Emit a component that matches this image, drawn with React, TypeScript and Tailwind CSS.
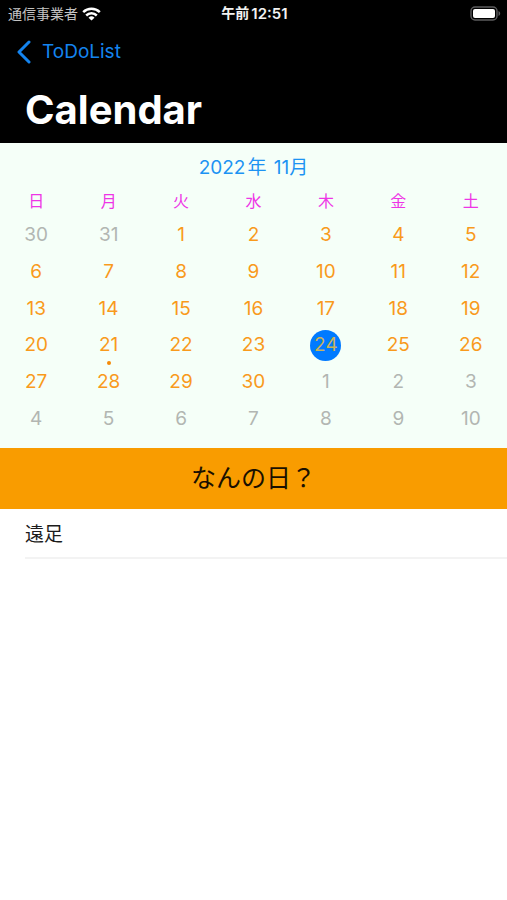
import React from "react";

const WEEKDAYS = ["日", "月", "火", "水", "木", "金", "土"];

type Day = { day: number; outside: boolean };

const DAYS: Day[] = [
  ...[30, 31].map((day) => ({ day, outside: true })),
  ...Array.from({ length: 30 }, (_, i) => ({ day: i + 1, outside: false })),
  ...Array.from({ length: 10 }, (_, i) => ({ day: i + 1, outside: true })),
];

const WEEKS = Array.from({ length: 6 }, (_, i) => DAYS.slice(i * 7, i * 7 + 7));

const SELECTED = 24;
const MARKED = 21;

function WifiIcon() {
  return (
    <svg width="19" height="14" viewBox="0 0 19 14" fill="none" stroke="white" strokeWidth="2.5" aria-hidden="true">
      <path d="M1.200 5.200a11.900 11.900 0 0 1 16.600 0" />
      <path d="M4.200 8.500a7.600 7.600 0 0 1 10.600 0" />
      <path d="M9.500 13.600 6.500 10.800a4.300 4.300 0 0 1 6 0Z" fill="white" stroke="none" />
    </svg>
  );
}

function BatteryIcon() {
  return (
    <svg width="31" height="15" viewBox="0 0 31 15" fill="none" aria-hidden="true">
      <rect x="1" y="1" width="26" height="13" rx="4" stroke="#5c5c5e" strokeWidth="1.4" />
      <rect x="3" y="3" width="22" height="9" rx="2" fill="white" />
      <path d="M28.5 5v5c1-.4 1.700-1.400 1.700-2.500S29.500 5.400 28.500 5Z" fill="#5c5c5e" />
    </svg>
  );
}

function StatusBar() {
  return (
    <div className="grid h-[27px] grid-cols-3 items-center pr-1.5 pl-2 text-sm">
      <div className="flex items-center gap-1 text-[#c4c4c4]">
        <span>通信事業者</span>
        <WifiIcon />
      </div>
      <div className="flex items-center justify-center gap-0.5 font-semibold whitespace-nowrap text-[#f2f2f2]">
        <span>午前</span>
        <span className="text-[15px]">12:51</span>
      </div>
      <div className="flex justify-end">
        <BatteryIcon />
      </div>
    </div>
  );
}

function DayCell({ day, outside }: Day) {
  const selected = !outside && day === SELECTED;
  const color = selected ? "bg-[#007aff] text-[#c9b35c]" : outside ? "text-[#b2b6b2]" : "text-[#f99a1c]";
  return (
    <td className="p-0 align-middle">
      <div className="flex justify-center">
        <button type="button" className={`relative flex size-[31px] items-center justify-center rounded-full ${color}`}>
          {day}
          {!outside && day === MARKED && (
            <span className="absolute top-full left-1/2 size-1 -translate-x-1/2 rounded-full bg-[#f58a07]" />
          )}
        </button>
      </div>
    </td>
  );
}

export default function App() {
  return (
    <div className="min-h-screen bg-white font-['Inter','Noto_Sans_CJK_JP',sans-serif]">
      <header className="bg-black pb-2">
        <StatusBar />
        <nav className="flex h-[50px] items-center pl-4">
          <a href="#todo" className="flex items-center gap-2.5 text-[19px] text-[#1484ef]">
            <svg width="16" height="24" viewBox="0 0 16 24" fill="none" stroke="currentColor" strokeWidth="3" strokeLinecap="round" strokeLinejoin="round" aria-hidden="true">
              <path d="M13 2 3 12l10 10" />
            </svg>
            ToDoList
          </a>
        </nav>
        <h1 className="px-[25px] pt-2 text-[40px] leading-[50px] font-bold text-white">Calendar</h1>
      </header>

      <main>
        <section className="bg-[#f5fff8] pt-2 pb-[11px]">
          <h2 className="text-center text-[19px] leading-[34px] text-[#1c93f3]">
            <span>2022</span>
            <span className="mx-0.5">年</span> <span>11月</span>
          </h2>
          <table className="h-[252px] w-full table-fixed border-collapse text-[19px] leading-6">
            <thead>
              <tr className="h-8">
                {WEEKDAYS.map((name) => (
                  <th key={name} scope="col" className="p-0 text-center align-middle text-base font-normal text-[#ee35e6]">
                    {name}
                  </th>
                ))}
              </tr>
            </thead>
            <tbody>
              {WEEKS.map((week, i) => (
                <tr key={i}>
                  {week.map((d) => (
                    <DayCell key={d.day} {...d} />
                  ))}
                </tr>
              ))}
            </tbody>
          </table>
        </section>

        <h2 className="bg-[#f99c00] text-center text-[25px] leading-[61px] text-[#1a1000]">なんの日？</h2>

        <ul>
          <li className="ml-[25px] border-b-2 border-[#f3f3f3] pt-1 text-[19px] leading-[44px] text-[#1c1c1c]">遠足</li>
        </ul>
      </main>
    </div>
  );
}
